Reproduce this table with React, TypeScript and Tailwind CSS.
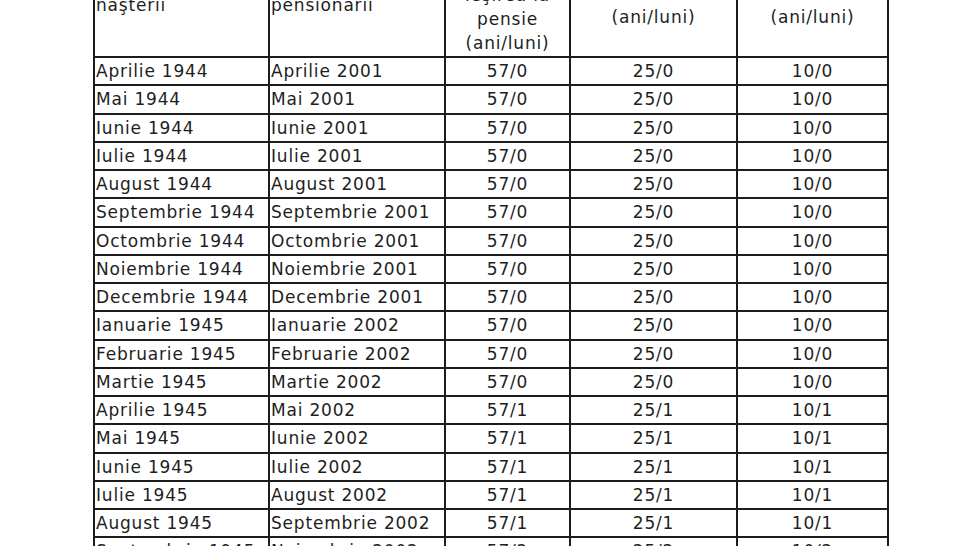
const ROWS: [string, string, string, string, string][] = [
  ['Aprilie 1944', 'Aprilie 2001', '57/0', '25/0', '10/0'],
  ['Mai 1944', 'Mai 2001', '57/0', '25/0', '10/0'],
  ['Iunie 1944', 'Iunie 2001', '57/0', '25/0', '10/0'],
  ['Iulie 1944', 'Iulie 2001', '57/0', '25/0', '10/0'],
  ['August 1944', 'August 2001', '57/0', '25/0', '10/0'],
  ['Septembrie 1944', 'Septembrie 2001', '57/0', '25/0', '10/0'],
  ['Octombrie 1944', 'Octombrie 2001', '57/0', '25/0', '10/0'],
  ['Noiembrie 1944', 'Noiembrie 2001', '57/0', '25/0', '10/0'],
  ['Decembrie 1944', 'Decembrie 2001', '57/0', '25/0', '10/0'],
  ['Ianuarie 1945', 'Ianuarie 2002', '57/0', '25/0', '10/0'],
  ['Februarie 1945', 'Februarie 2002', '57/0', '25/0', '10/0'],
  ['Martie 1945', 'Martie 2002', '57/0', '25/0', '10/0'],
  ['Aprilie 1945', 'Mai 2002', '57/1', '25/1', '10/1'],
  ['Mai 1945', 'Iunie 2002', '57/1', '25/1', '10/1'],
  ['Iunie 1945', 'Iulie 2002', '57/1', '25/1', '10/1'],
  ['Iulie 1945', 'August 2002', '57/1', '25/1', '10/1'],
  ['August 1945', 'Septembrie 2002', '57/1', '25/1', '10/1'],
  ['Septembrie 1945', 'Noiembrie 2002', '57/2', '25/2', '10/2'],
];

const cell = 'border-2 border-[#1c1c1c] p-0 align-middle';

export default function App() {
  return (
    <div className="w-[970px] h-[546px] overflow-hidden bg-white">
      <table
        className="ml-[93px] mt-[-62px] border-collapse table-fixed text-[17px] tracking-[0.8px] text-[#1e1e1e] font-['DejaVu_Sans',sans-serif]"
      >
        <colgroup>
          <col className="w-[175px]" />
          <col className="w-[176px]" />
          <col className="w-[125px]" />
          <col className="w-[167px]" />
          <col className="w-[151px]" />
        </colgroup>
        <thead>
          <tr className="h-[118px] leading-[24px]">
            <th className="border-2 border-[#1c1c1c] align-top font-normal text-left pl-[1px] pt-[29px]">
              Luna şi anul
              <br />
              naşterii
            </th>
            <th className="border-2 border-[#1c1c1c] align-top font-normal text-left pl-[1px] pt-[29px]">
              Luna şi anul
              <br />
              pensionării
            </th>
            <th className="border-2 border-[#1c1c1c] align-top font-normal text-center pt-[19px]">
              Vârsta la
              <br />
              ieşirea la
              <br />
              pensie
              <br />
              (ani/luni)
            </th>
            <th className="border-2 border-[#1c1c1c] align-top font-normal text-center pt-[17px]">
              Stagiul complet
              <br />
              de cotizare
              <br />
              (ani/luni)
            </th>
            <th className="border-2 border-[#1c1c1c] align-top font-normal text-center pt-[17px]">
              Stagiul minim
              <br />
              de cotizare
              <br />
              (ani/luni)
            </th>
          </tr>
        </thead>
        <tbody>
          {ROWS.map((r) => (
            <tr key={r[0]} className="h-[28.25px] leading-[24px]">
              <td className={`${cell} text-left pl-[1px] whitespace-nowrap`}>{r[0]}</td>
              <td className={`${cell} text-left pl-[1px] whitespace-nowrap`}>{r[1]}</td>
              <td className={`${cell} text-center`}>{r[2]}</td>
              <td className={`${cell} text-center`}>{r[3]}</td>
              <td className={`${cell} text-center`}>{r[4]}</td>
            </tr>
          ))}
        </tbody>
      </table>
    </div>
  );
}
